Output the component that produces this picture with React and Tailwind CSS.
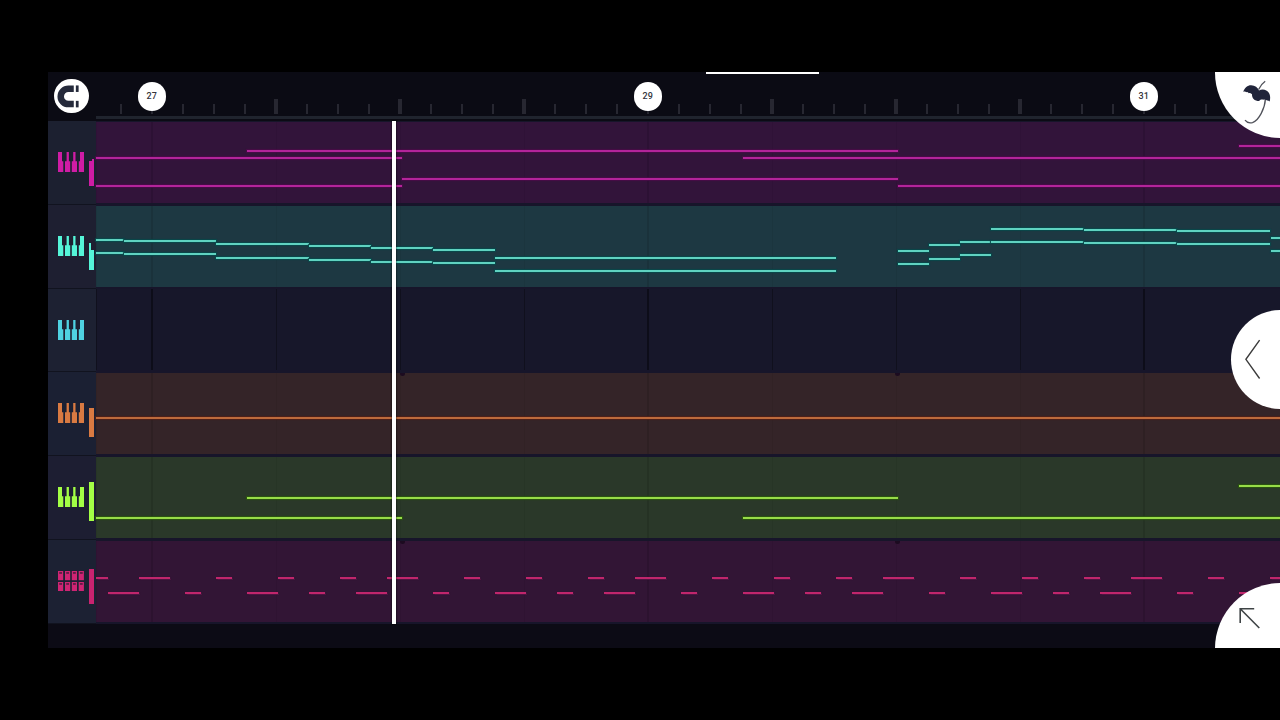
import React from "react";

const TRACKS = [
  {
    kind: "piano", icon: "text-[#cf1ca5]", lane: "bg-[#32143a]", side: "bg-[#1c2030]",
    note: "bg-[#b3249a] shadow-[0_0_1px_1px_#480c48]",
    meter: [[91.5, 159, 2, 3], [89, 161, 5, 24.5]], meterColor: "bg-[#cf1ca5]",
    notes: [
      [96, 402, 156.4], [96, 402, 184.9], [247, 898, 149.6], [402, 898, 177.8],
      [743, 1280, 156.4], [898, 1280, 184.9], [1239, 1280, 144.7],
    ],
  },
  {
    kind: "piano", icon: "text-[#55f5d8]", lane: "bg-[#1d3842]", side: "bg-[#1e1f31]",
    note: "bg-[#5fd2c0] shadow-[0_0_1px_1px_#09494b]",
    meter: [[89, 242.5, 2, 8], [89, 250, 5, 19.5]], meterColor: "bg-[#55f5d8]",
    notes: [
      [96, 123.5, 238.4], [123.5, 216, 239.4], [216, 309, 242.9], [309, 371, 245], [371, 433, 247], [433, 495, 248.4],
      [96, 123.5, 251.9], [123.5, 216, 253], [216, 309, 256.4], [309, 371, 258.4], [371, 433, 261], [433, 495, 262],
      [495, 836, 256.4], [495, 836, 269.8],
      [898, 929, 249.5], [929, 960, 243.8], [960, 991, 240.5], [991, 1084, 227.3], [1084, 1177, 228.4], [1177, 1270, 229.4],
      [898, 929, 263], [929, 960, 257.4], [960, 991, 254], [991, 1084, 240.5], [1084, 1177, 241.8], [1177, 1270, 243],
      [1270.5, 1280, 236.4], [1270.5, 1280, 249.7],
    ],
  },
  {
    kind: "piano", icon: "text-[#4fd2e1]", lane: "bg-[#17172a]", side: "bg-[#1d2132]",
    note: "bg-[#4fd2e1]", meter: [], meterColor: "bg-[#4fd2e1]", notes: [],
  },
  {
    kind: "piano", icon: "text-[#d97a42]", lane: "bg-[#342428]", side: "bg-[#1b2033]",
    note: "bg-[#bd6a3c] shadow-[0_0_1px_1px_#4e2119]",
    meter: [[89, 408, 5, 29]], meterColor: "bg-[#d97a42]",
    notes: [[96, 1280, 416.2]],
  },
  {
    kind: "piano", icon: "text-[#a3ff45]", lane: "bg-[#2a3829]", side: "bg-[#1d1e32]",
    note: "bg-[#97dc48] shadow-[0_0_1px_1px_#2c5510]",
    meter: [[89, 482.3, 5, 38.5]], meterColor: "bg-[#a3ff45]",
    notes: [[96, 402, 516.2], [247, 898, 496.8], [743, 1280, 516.2], [1239, 1280, 484.4]],
  },
  {
    kind: "pads", icon: "text-[#ce2473]", lane: "bg-[#321535]", side: "bg-[#1c2133]",
    note: "bg-[#c0266c] shadow-[0_0_1px_0.5px_#4d1541]",
    meter: [[89, 569.4, 5, 35]], meterColor: "bg-[#c92370]",
    notes: drumNotes(),
  },
];

function drumNotes() {
  const upper = [[0, 31], [77, 15.5], [139, 15.5], [201, 15.5]];
  const lower = [[-31, 31], [46, 15.5], [108, 31], [170, 15.5]];
  const out = [[96, 108, 576.2]];
  for (let bar = 0; bar < 5; bar++) {
    const base = 139 + bar * 248;
    for (const [x, w] of upper) out.push([base + x, Math.min(1280, base + x + w), 576.2]);
    for (const [x, w] of lower) out.push([base + x, Math.min(1280, base + x + w), 591.4]);
  }
  return out.filter(([a, b]) => b > a);
}

const TOP = 121;
const PITCH = 83.75;
const ORIGIN = 47.5;
const NOTE_SHIFT = 0.35;

const TICKS = Array.from({ length: 37 }, (_, i) => i);
const LABELS = { 1: "27", 17: "29", 33: "31" };

function PianoIcon() {
  return (
    <svg width="26" height="20" viewBox="0 0 26 20" fill="currentColor">
      <path d="M0 0H4V9.3H5.3V20H0Z" />
      <path d="M8.6 0H10.9V9.3H12.2V20H7V9.3H8.6Z" />
      <path d="M15.2 0H17.5V9.3H19V20H13.8V9.3H15.2Z" />
      <path d="M22 0H26V20H20.8V9.3H22Z" />
    </svg>
  );
}

function PadsIcon() {
  return (
    <svg width="26" height="20" viewBox="0 0 26 20">
      {[0, 11].map((y) =>
        [0, 7, 13.8, 20.7].map((x) => (
          <g key={x + "-" + y}>
            <rect x={x} y={y} width="5.2" height="9.2" fill="currentColor" />
            <rect x={x + 1.2} y={y + 1.1} width="2.8" height="1.7" fill="#5a1b42" />
          </g>
        ))
      )}
    </svg>
  );
}

function Ruler() {
  return (
    <div className="flex h-[49px] shrink-0 bg-[#0b0b14]">
      <div className="flex w-[48.5px] shrink-0 items-center pb-px pl-[6.7px]">
        <div className="flex size-[34.6px] items-center justify-center rounded-full bg-white">
          <svg width="35" height="35" viewBox="0 0 35 35">
            <path d="M20 9.6H14.6a7.8 7.8 0 0 0 0 15.6H20" fill="none" stroke="#252a3b" strokeWidth="6.6" />
            <rect x="22.1" y="6.3" width="2.8" height="6.6" fill="#252a3b" />
            <rect x="22.1" y="21.9" width="2.8" height="6.6" fill="#252a3b" />
          </svg>
        </div>
      </div>
      <div className="flex min-w-0 flex-1 flex-col">
        <div className="flex h-[42px] pl-[9.5px]">
          {TICKS.map((i) => (
            <div key={i} className="relative flex w-[31px] shrink-0 items-end justify-center">
              <div className={i % 4 === 1 && !LABELS[i] ? "h-[15px] w-1 bg-[#272731]" : "h-2.5 w-0.5 bg-[#272731]"} />
              {LABELS[i] && (
                <div className="absolute top-[10px] left-px flex size-[28.5px] items-center justify-center rounded-full bg-white font-[Roboto,sans-serif] text-[9px] leading-none font-medium tracking-[0.2px] text-[#33343c]">
                  {LABELS[i]}
                </div>
              )}
            </div>
          ))}
        </div>
        <div className="mt-[2px] h-[3px] bg-[#20242e]" />
      </div>
    </div>
  );
}

function Track({ track, index }) {
  const y0 = TOP + index * PITCH;
  const empty = track.notes.length === 0;
  return (
    <div className="relative flex h-[83.75px] shrink-0">
      <div className={"flex w-[48.5px] shrink-0 border-b border-[#11131f] pt-[31px] pl-[10.6px] " + track.side + " " + track.icon}>
        {track.kind === "piano" ? <PianoIcon /> : <PadsIcon />}
      </div>
      <div className={"flex min-w-0 flex-1 bg-[#17152a] pb-[2px] " + (empty ? "pt-0" : "pt-px")}>
        <div className={"relative flex-1 overflow-hidden " + track.lane}>
          {[55, 551, 1047].map((x) => (
            <div key={x} className={"absolute inset-y-0 w-[2px] " + (empty ? "bg-black/40" : "bg-black/10")} style={{ left: x }} />
          ))}
          {[0, 179.5, 303.5, 427.5, 675.5, 799.5, 923.5].map((x) => (
            <div key={x} className={"absolute inset-y-0 w-px " + (empty ? "bg-black/30" : "bg-black/5")} style={{ left: x }} />
          ))}
          {(index === 3 || index === 5) &&
            [304, 799].map((x) => (
              <div key={"m" + x} className="absolute top-0 h-[3px] w-[5px] rounded-b-full bg-[#1c0b20]" style={{ left: x }} />
            ))}
        </div>
      </div>
      {track.meter.map(([x, y, w, h], i) => (
        <div key={"b" + i} className={"absolute " + track.meterColor} style={{ left: x - ORIGIN, top: y - y0, width: w, height: h }} />
      ))}
      {track.notes.map(([a, b, y], i) => (
        <div key={i} className={"absolute h-[2px] " + track.note} style={{ left: a - ORIGIN, top: y + NOTE_SHIFT - y0, width: b - a }} />
      ))}
    </div>
  );
}

export default function App() {
  return (
    <div className="h-[720px] w-[1280px] overflow-hidden bg-black py-[72px] pl-[47.5px]">
      <div className="relative flex h-[576px] flex-col overflow-hidden bg-[#0c0b15]">
        <Ruler />
        <div className="flex flex-col">
          {TRACKS.map((t, i) => (
            <Track key={i} track={t} index={i} />
          ))}
        </div>

        <div className="absolute top-0 left-[658.5px] h-[2px] w-[113px] bg-white" />
        <div className="absolute top-[49px] left-[344.4px] h-[503px] w-[4.6px] bg-white shadow-[0_0_1px_1px_rgba(0,0,0,0.3)]" />

        <div className="absolute -top-[65.5px] -right-[65.5px] size-[131px] rounded-full bg-white" />
        <svg className="absolute top-[7px] right-[7px]" width="34" height="46" viewBox="0 0 34 46" fill="none">
          <path d="M26.2 2.2C23.3 4.2 21.2 6.8 19.6 10.5M26.4 20C26 29 20 41.5 13.5 43.6C10.4 44.4 7.8 43.6 6 41.2" stroke="#50525a" strokeWidth="1.3" />
          <path d="M4.2 13C5.5 8.8 8.7 6.2 12.2 6.3C16 6.5 18.8 8.5 20 11.6C23.5 9.6 28 10.8 30 14C31.5 16.6 31.4 19.6 30.7 22.6C29.8 21.7 28.8 21.3 28 21.6C27 20.6 25.6 20.2 24.2 20.8C22.8 20.3 21.2 20.8 20.2 22C18 21.9 15.8 21.3 14.6 19.9C13.4 18.6 12.9 16.9 13 15.2C11.8 14.2 10.6 13.9 9.8 14.2C9 13.2 8.2 12.9 7.4 13.2C6.4 12.4 5.2 12.4 4.2 13Z" fill="#20243a" />
        </svg>

        <div className="absolute top-[238px] -right-[49.5px] size-[99px] rounded-full bg-white" />
        <svg className="absolute top-[264px] right-[14px]" width="24" height="46" viewBox="0 0 24 46" fill="none">
          <path d="M17.6 4.2L3.9 23.3L17.6 42.5" stroke="#3b3b3b" strokeWidth="1.4" />
        </svg>

        <div className="absolute -right-[65.5px] -bottom-[65.5px] size-[131px] rounded-full bg-white" />
        <svg className="absolute right-[18px] bottom-[16px]" width="26" height="26" viewBox="0 0 26 26" fill="none">
          <path d="M18.2 2.7H4.2V17M4.2 2.7L23.3 22" stroke="#3f4446" strokeWidth="1.6" />
        </svg>
      </div>
    </div>
  );
}
